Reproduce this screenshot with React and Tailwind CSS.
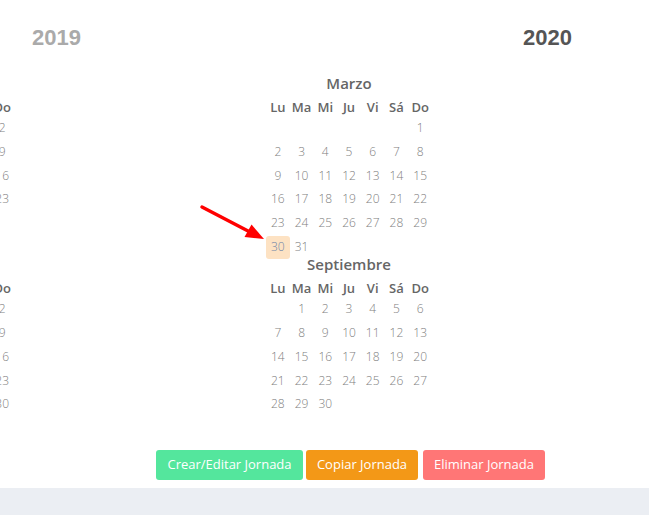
import React from 'react';

const DAYS = ['Lu', 'Ma', 'Mi', 'Ju', 'Vi', 'Sá', 'Do'];

const buildMonth = (year, month) => {
  const first = (new Date(year, month, 1).getDay() + 6) % 7;
  const total = new Date(year, month + 1, 0).getDate();
  const cells = [];
  for (let i = 0; i < first; i++) cells.push(null);
  for (let d = 1; d <= total; d++) cells.push(d);
  while (cells.length % 7 !== 0) cells.push(null);
  return cells;
};

const Month = ({ name, year, month, marked }) => {
  const cells = buildMonth(year, month);
  return (
    <div className="w-[418px] shrink-0 flex flex-col items-center">
      <div className="text-[15px] leading-[14px] h-[14px] font-semibold text-[#666]">{name}</div>
      <div className="grid grid-cols-7 w-[166px]">
        {DAYS.map((d) => (
          <div key={d} className="h-[26.5px] pt-[8px] leading-[18px] text-center text-[13px] font-semibold text-[#666]">
            {d}
          </div>
        ))}
        {cells.map((d, i) => (
          <div key={i} className="h-[23.85px] flex items-center justify-center">
            {d && (
              <span
                className={
                  marked === d
                    ? 'w-[24px] h-[23px] rounded-[3px] bg-[#fde2c3] text-[#6f86a8] flex items-center justify-center text-[12px] font-light'
                    : 'text-[12px] font-light text-[#808080]'
                }
              >
                {d}
              </span>
            )}
          </div>
        ))}
      </div>
    </div>
  );
};

const App = () => {
  return (
    <div className="relative w-full min-h-[515px] flex flex-col bg-white overflow-hidden font-['Open_Sans',sans-serif]">
      <div className="flex items-start pt-[25px] font-['Liberation_Sans',Arial,sans-serif] font-bold text-[22px] leading-[25px]">
        <span className="ml-[32px] text-[#aaaaaa]">2019</span>
        <span className="ml-auto mr-[77px] text-[#555555]">2020</span>
      </div>

      <div className="pt-[25.5px] overflow-hidden">
        <div className="flex items-start ml-[-278px]">
          <Month name="Febrero" year={2020} month={1} />
          <Month name="Marzo" year={2020} month={2} marked={30} />
        </div>
        <div className="flex items-start ml-[-278px] mt-[-2.5px]">
          <Month name="Agosto" year={2020} month={7} />
          <Month name="Septiembre" year={2020} month={8} />
        </div>
      </div>

      <div className="flex items-center pl-[156px] mt-[10px] text-[13px] text-white">
        <button className="h-[30px] w-[147px] rounded-[3px] bg-[#54e69d]">Crear/Editar Jornada</button>
        <button className="h-[30px] w-[112px] ml-[3px] rounded-[3px] bg-[#f39817]">Copiar Jornada</button>
        <button className="h-[30px] w-[122px] ml-[5px] rounded-[3px] bg-[#ff7676]">Eliminar Jornada</button>
      </div>

      <div className="mt-auto h-[27px] bg-[#ebeef3]" />

      <svg className="absolute left-0 top-0 pointer-events-none" width="649" height="515">
        <line x1="202" y1="207" x2="249" y2="231.5" stroke="#ff0000" strokeWidth="3.5" strokeLinecap="round" />
        <polygon points="264,239 244.5,237 251.5,224.5" fill="#ff0000" />
      </svg>
    </div>
  );
};

export default App;
